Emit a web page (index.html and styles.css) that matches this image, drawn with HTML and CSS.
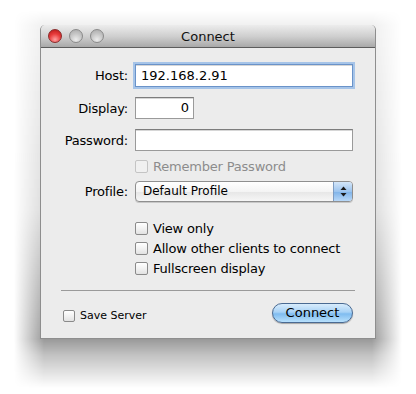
FILE: index.html
```html
<!DOCTYPE html>
<html>
  <head>
    <title>Connect</title>
    <meta charset="UTF-8">
    <link rel="stylesheet" href="styles.css">
  </head>
  <body>
    <div class="shadow"></div>
    <div class="window">
      <div class="titlebar">
        <div class="lights">
          <span class="light close"></span>
          <span class="light"></span>
          <span class="light"></span>
        </div>
        <div class="title">Connect</div>
      </div>
      <div class="content">
        <div class="row host_row">
          <label class="label">Host:</label>
          <div class="field wide focused">192.168.2.91</div>
        </div>
        <div class="row display_row">
          <label class="label">Display:</label>
          <div class="field short">0</div>
        </div>
        <div class="row pass_row">
          <label class="label">Password:</label>
          <div class="field wide"></div>
        </div>
        <div class="row remember_row">
          <span class="label"></span>
          <div class="check disabled"><span class="box"></span>Remember Password</div>
        </div>
        <div class="row profile_row">
          <label class="label">Profile:</label>
          <div class="popup">
            <span class="popup_text">Default Profile</span>
            <span class="popup_arrows">
              <svg width="7" height="11" viewBox="0 0 7 11">
                <path d="M3.5 0.5 L6.5 4 L0.5 4 Z" fill="#1a1a1a"/>
                <path d="M3.5 10.5 L6.5 7 L0.5 7 Z" fill="#1a1a1a"/>
              </svg>
            </span>
          </div>
        </div>
        <div class="options">
          <div class="check"><span class="box"></span>View only</div>
          <div class="check"><span class="box"></span>Allow other clients to connect</div>
          <div class="check"><span class="box"></span>Fullscreen display</div>
        </div>
        <div class="separator"></div>
        <div class="footer">
          <div class="check small"><span class="box"></span>Save Server</div>
          <div class="button">Connect</div>
        </div>
      </div>
    </div>
  </body>
</html>
```
FILE: styles.css
```css
body
{
  margin: 0;
  padding: 25px 0 0 40px;
  background: #ffffff;
  font-family: "DejaVu Sans", "Liberation Sans", sans-serif;
  font-size: 12px;
  color: #000;
}
/* 窓の影（背面に敷く） */
.shadow
{
  position: absolute;
  left: 14px;
  top: 10px;
  width: 388px;
  height: 378px;
  z-index: -1;
  background: linear-gradient(rgba(0, 0, 0, 0), rgba(0, 0, 0, 0.06) 15px, rgba(0, 0, 0, 0.14) 200px, rgba(0, 0, 0, 0.4) 329px, rgba(0, 0, 0, 0.24) 345px, rgba(0, 0, 0, 0));
  -webkit-mask-image: linear-gradient(90deg, transparent, #000 30px, #000 calc(100% - 30px), transparent);
  mask-image: linear-gradient(90deg, transparent, #000 30px, #000 calc(100% - 30px), transparent);
}
.window
{
  width: 336px;
  height: 314px;
  background: #ececec;
  border-radius: 5px 5px 0 0;
  box-sizing: border-box;
  border: 1px solid #8e8e8e;
  border-top: none;
}
.titlebar
{
  height: 22px;
  position: relative;
  display: flex;
  align-items: center;
  justify-content: center;
  background: linear-gradient(#ececec, #d0d0d0 50%, #a9a9a9);
  border-bottom: 1px solid #5c5c5c;
  border-radius: 5px 5px 0 0;
}
.lights
{
  position: absolute;
  left: 7px;
  top: 4px;
  display: flex;
  gap: 7px;
}
.light
{
  width: 14px;
  height: 14px;
  border-radius: 50%;
  border: 1px solid #8a8a8a;
  background: radial-gradient(circle at 50% 80%, #ececec, #c4c4c4 55%, #a8a8a8);
  box-sizing: border-box;
}
.light.close
{
  border-color: #8a2a2a;
  background: radial-gradient(circle at 50% 80%, #ffa0a0, #e83c3c 50%, #b41616);
}
.title
{
  font-size: 13px;
  color: #111;
  margin-top: 1px;
}
.content
{
  padding: 16px 0 0 6px;
}
.row
{
  display: flex;
  align-items: center;
}
.label
{
  width: 81px;
  text-align: right;
  margin-right: 7px;
  font-size: 13px;
  letter-spacing: -0.2px;
}
.field
{
  height: 22px;
  box-sizing: border-box;
  background: #fff;
  border: 1px solid #9a9a9a;
  border-top-color: #7d7d7d;
  box-shadow: inset 0 1px 0 #d6d6d6;
  padding: 0 4px;
  line-height: 20px;
  font-size: 13px;
}
.wide
{
  width: 218px;
}
.short
{
  width: 59px;
  text-align: right;
}
.focused
{
  height: 23px;
  border: 1px solid #6a93c9;
  box-shadow: 0 0 0 2px #a6c4e8, inset 0 1px 0 #d6d6d6;
  line-height: 21px;
  padding-left: 5px;
}
.display_row
{
  margin-top: 10px;
}
.pass_row
{
  margin-top: 10px;
}
.remember_row
{
  margin-top: 8px;
}
.profile_row
{
  margin-top: 8px;
}
.check
{
  display: flex;
  align-items: center;
  font-size: 13px;
  letter-spacing: -0.2px;
  height: 14px;
}
.box
{
  width: 13px;
  height: 13px;
  box-sizing: border-box;
  border: 1px solid #8a8a8a;
  border-radius: 2px;
  background: linear-gradient(#ffffff, #f2f2f2 50%, #e2e2e2);
  margin-right: 5px;
}
.check.disabled
{
  color: #8c8c8c;
}
.check.disabled .box
{
  border-color: #c4c4c4;
  background: #f0f0f0;
}
.popup
{
  width: 218px;
  height: 21px;
  box-sizing: border-box;
  border: 1px solid #8f8f8f;
  border-radius: 4px;
  display: flex;
  background: linear-gradient(#ffffff, #f4f4f4 50%, #e6e6e6 51%, #f6f6f6);
  box-shadow: 0 1px 0 #c8c8c8;
  overflow: hidden;
}
.popup_text
{
  flex: 1;
  padding-left: 7px;
  line-height: 19px;
  font-size: 12px;
}
.popup_arrows
{
  width: 18px;
  border-left: 1px solid #7e9cc2;
  display: flex;
  align-items: center;
  justify-content: center;
  background: linear-gradient(#d4e6f9, #9cc4ee 50%, #7eb2e8 51%, #b8d8f8);
}
.options
{
  margin: 19px 0 0 88px;
  display: flex;
  flex-direction: column;
  gap: 6px;
}
.separator
{
  margin: 15px 0 0 14px;
  width: 294px;
  height: 1px;
  background: #9a9a9a;
}
.footer
{
  margin: 12px 0 0 16px;
  width: 290px;
  display: flex;
  justify-content: space-between;
  align-items: center;
}
.check.small
{
  font-size: 11px;
  letter-spacing: 0;
  margin-top: 5px;
}
.check.small .box
{
  width: 12px;
  height: 12px;
}
.button
{
  width: 81px;
  height: 20px;
  box-sizing: border-box;
  border: 1px solid #4a6a92;
  border-radius: 10px;
  text-align: center;
  line-height: 17px;
  font-size: 13px;
  background: linear-gradient(#d8ecfc, #a8d2f6 45%, #7fbcf0 55%, #b8e0fc);
  box-shadow: 0 1px 1px rgba(0, 0, 0, 0.3);
}
```
